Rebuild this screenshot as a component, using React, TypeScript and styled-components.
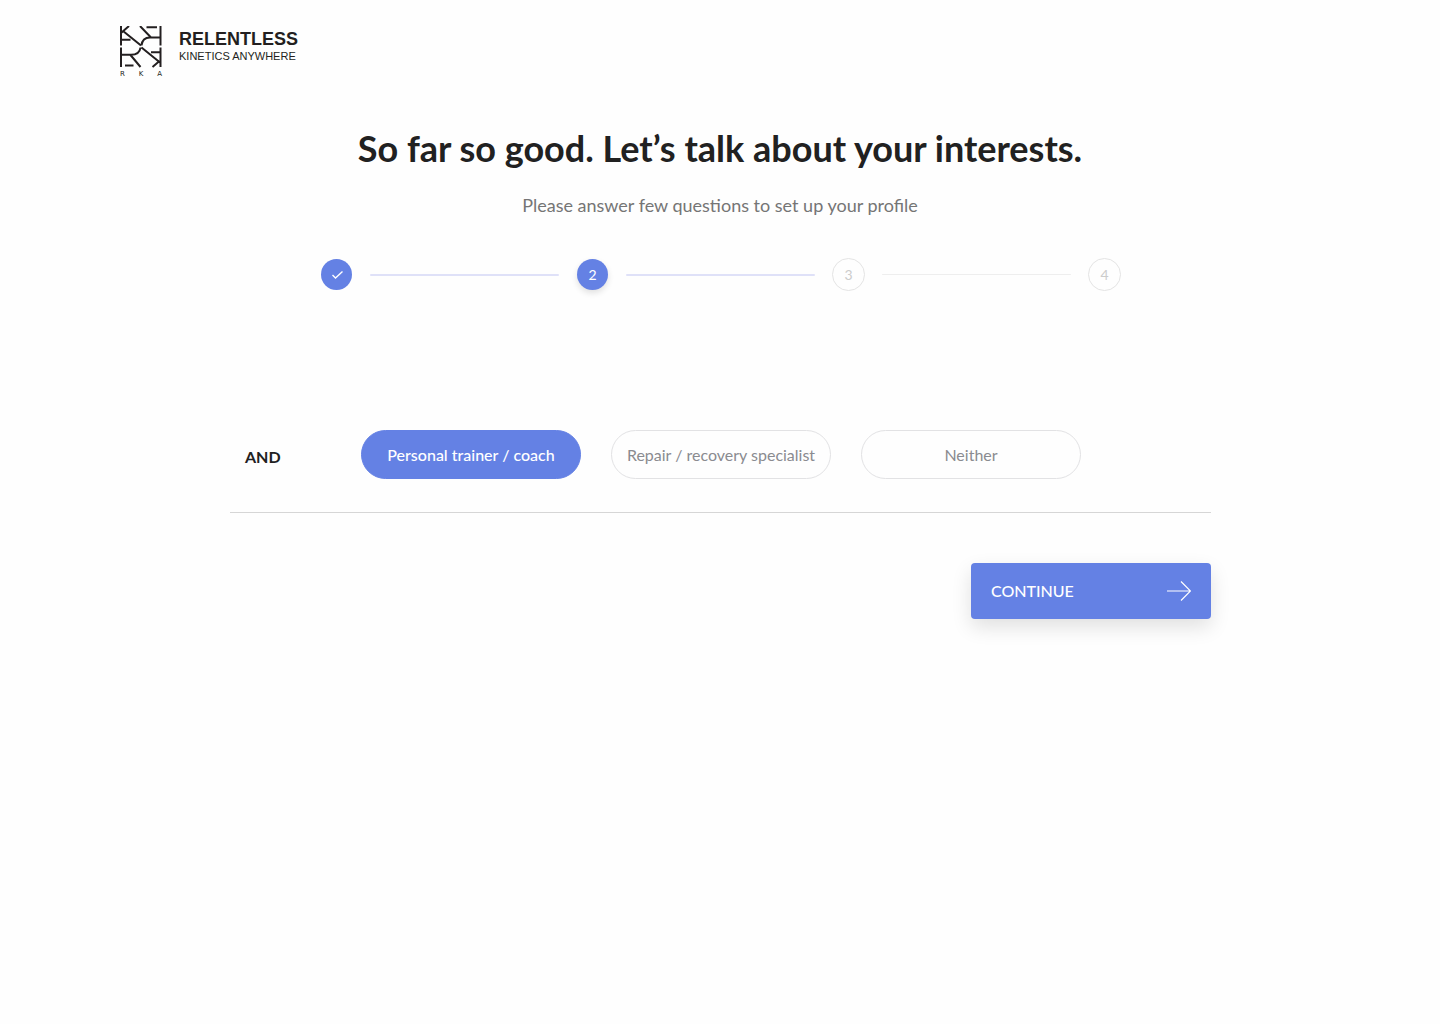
import React, { useState } from "react";
import styled, { createGlobalStyle } from "styled-components";

const GlobalStyle = createGlobalStyle`
  *, *::before, *::after { box-sizing: border-box; }
  body {
    margin: 0;
    background: #fefefe;
    color: #212121;
    font-family: Lato, "Open Sans", sans-serif;
    font-size: 16px;
    line-height: 24px;
  }
`;

const Header = styled.header`
  display: flex;
  padding: 26px 120px 0;
`;

const Brand = styled.a`
  display: flex;
  gap: 17px;
  color: #231f20;
  text-decoration: none;
  font-family: "Liberation Sans", Arial, sans-serif;
`;

const Mark = styled.span`
  display: flex;
  flex-direction: column;
  width: 42px;
`;

const Initials = styled.span`
  display: flex;
  justify-content: space-between;
  margin-top: 2px;
  font-family: "DejaVu Sans", sans-serif;
  font-size: 7px;
  line-height: 8px;
`;

const BrandText = styled.span`
  display: flex;
  flex-direction: column;
  padding-top: 3px;
`;

const BrandName = styled.strong`
  font-size: 18px;
  line-height: 20px;
`;

const BrandTagline = styled.span`
  font-size: 11px;
  line-height: 14px;
`;

const Main = styled.main`
  display: flex;
  flex-direction: column;
  align-items: center;
  padding: 46px 24px 48px;
`;

const Title = styled.h1`
  margin: 0;
  font-size: 36px;
  line-height: 48px;
  font-weight: 700;
  text-align: center;
`;

const Subtitle = styled.p`
  margin: 21px 0 0;
  color: #757575;
  font-size: 18px;
  line-height: 24px;
  text-align: center;
`;

const Flow = styled.div`
  display: flex;
  flex-direction: column;
  align-items: center;
  width: 100%;
  padding-left: 1px;
`;

const Steps = styled.ol`
  display: flex;
  align-items: center;
  width: 100%;
  max-width: 801px;
  margin: 41px 0 0;
  padding: 0;
  list-style: none;
`;

type StepState = "done" | "current" | "upcoming";

const Step = styled.li`
  display: flex;
  align-items: center;
  justify-content: center;
  flex: none;
  width: 33px;
  height: 33px;
`;

const Bullet = styled.span<{ $state: StepState }>`
  display: flex;
  align-items: center;
  justify-content: center;
  width: ${(p) => (p.$state === "upcoming" ? 33 : 31)}px;
  height: ${(p) => (p.$state === "upcoming" ? 33 : 31)}px;
  border: ${(p) => (p.$state === "upcoming" ? "1px solid #e4e4e4" : "0")};
  border-radius: 50%;
  background: ${(p) => (p.$state === "upcoming" ? "transparent" : "#6481e4")};
  box-shadow: ${(p) => (p.$state === "current" ? "0 3px 6px rgba(0, 0, 0, 0.12)" : "none")};
  color: ${(p) => (p.$state === "upcoming" ? "#cccccc" : "#ffffff")};
  font-size: 14px;
  line-height: 16px;
`;

const Connector = styled.li<{ $reached: boolean }>`
  flex: 1;
  height: ${(p) => (p.$reached ? 2 : 1)}px;
  margin: 0 17px;
  border-radius: 1px;
  background: ${(p) => (p.$reached ? "#dfe1f8" : "#eeeeee")};
`;

const Form = styled.form`
  display: flex;
  flex-direction: column;
  width: 100%;
  max-width: 981px;
  margin-top: 139px;
`;

const Question = styled.div`
  display: flex;
  align-items: center;
  padding: 0 0 33px 15px;
  border-bottom: 1px solid #d6d6d6;
`;

const QuestionLabel = styled.span`
  flex: none;
  width: 116px;
  padding-top: 4px;
  font-weight: 700;
`;

const Options = styled.div`
  display: flex;
  flex-wrap: wrap;
  gap: 30px;
`;

const Pill = styled.label<{ $selected: boolean }>`
  position: relative;
  display: flex;
  align-items: center;
  justify-content: center;
  width: 220px;
  height: 49px;
  border: 1px solid ${(p) => (p.$selected ? "#6481e4" : "#e2e2e4")};
  border-radius: 25px;
  background: ${(p) => (p.$selected ? "#6481e4" : "transparent")};
  color: ${(p) => (p.$selected ? "#ffffff" : "#8a8b90")};
  font-weight: ${(p) => (p.$selected ? 500 : 400)};
  cursor: pointer;
`;

const Radio = styled.input`
  position: absolute;
  inset: 0;
  width: 100%;
  height: 100%;
  margin: 0;
  opacity: 0;
  cursor: pointer;
`;

const Continue = styled.button`
  display: flex;
  align-items: center;
  justify-content: space-between;
  align-self: flex-end;
  width: 240px;
  height: 56px;
  margin-top: 50px;
  padding: 0 20px;
  border: 0;
  border-radius: 4px;
  background: #6481e4;
  box-shadow: 0 8px 20px rgba(0, 0, 0, 0.12);
  color: #ffffff;
  font: 500 16px/24px Lato, "Open Sans", sans-serif;
  cursor: pointer;
`;

const LogoDrawing = () => (
  <svg width="42" height="42" viewBox="0 0 42 42" fill="none" stroke="#231f20" strokeWidth="2" aria-hidden="true">
    <path d="M1 0v19.5M9 0 1 7M3 5l18 14.500M1 13.800h9.500M20 0l11 11.500M41 11.500H30c-5 0-8 3-8.500 8M40.500 0v19.500M26.500 1.300h10.500" />
    <path d="M1 21.500V41M1 28.800h10c6 0 9-3 9.500-7.300M10.500 29l10 12M21.500 21.500l18.500 15M40.500 21.500V41M31 26.200h9.500M39.500 35l-7 6M5 39.500h8.500" />
  </svg>
);

const steps: StepState[] = ["done", "current", "upcoming", "upcoming"];
const options = ["Personal trainer / coach", "Repair / recovery specialist", "Neither"];

export default function App() {
  const [choice, setChoice] = useState(options[0]);

  return (
    <>
      <GlobalStyle />
      <Header>
        <Brand href="#">
          <Mark>
            <LogoDrawing />
            <Initials>
              <span>R</span>
              <span>K</span>
              <span>A</span>
            </Initials>
          </Mark>
          <BrandText>
            <BrandName>RELENTLESS</BrandName>
            <BrandTagline>KINETICS ANYWHERE</BrandTagline>
          </BrandText>
        </Brand>
      </Header>
      <Main>
        <Title>So far so good. Let’s talk about your interests.</Title>
        <Subtitle>Please answer few questions to set up your profile</Subtitle>
        <Flow>
          <Steps>
            {steps.map((state, i) => (
              <React.Fragment key={i}>
                {i > 0 && <Connector $reached={i < 3} aria-hidden="true" />}
                <Step aria-current={state === "current" ? "step" : undefined}>
                  <Bullet $state={state}>
                    {state === "done" ? (
                      <svg width="13" height="10" viewBox="0 0 13 10" fill="none" stroke="currentColor" strokeWidth="1.4" aria-label="Done">
                        <path d="M2.500 5l3 3 7-6.500" />
                      </svg>
                    ) : (
                      i + 1
                    )}
                  </Bullet>
                </Step>
              </React.Fragment>
            ))}
          </Steps>
          <Form onSubmit={(e) => e.preventDefault()}>
            <Question role="radiogroup" aria-labelledby="role-label">
              <QuestionLabel id="role-label">AND</QuestionLabel>
              <Options>
                {options.map((option) => (
                  <Pill key={option} $selected={option === choice}>
                    <Radio type="radio" name="role" checked={option === choice} onChange={() => setChoice(option)} />
                    {option}
                  </Pill>
                ))}
              </Options>
            </Question>
            <Continue type="submit">
              CONTINUE
              <svg width="24" height="20" viewBox="0 0 24 20" fill="none" stroke="currentColor" strokeWidth="1.2" aria-hidden="true">
                <path d="M0 10h23.500M14 .5l9.500 9.500-9.500 9.500" />
              </svg>
            </Continue>
          </Form>
        </Flow>
      </Main>
    </>
  );
}
